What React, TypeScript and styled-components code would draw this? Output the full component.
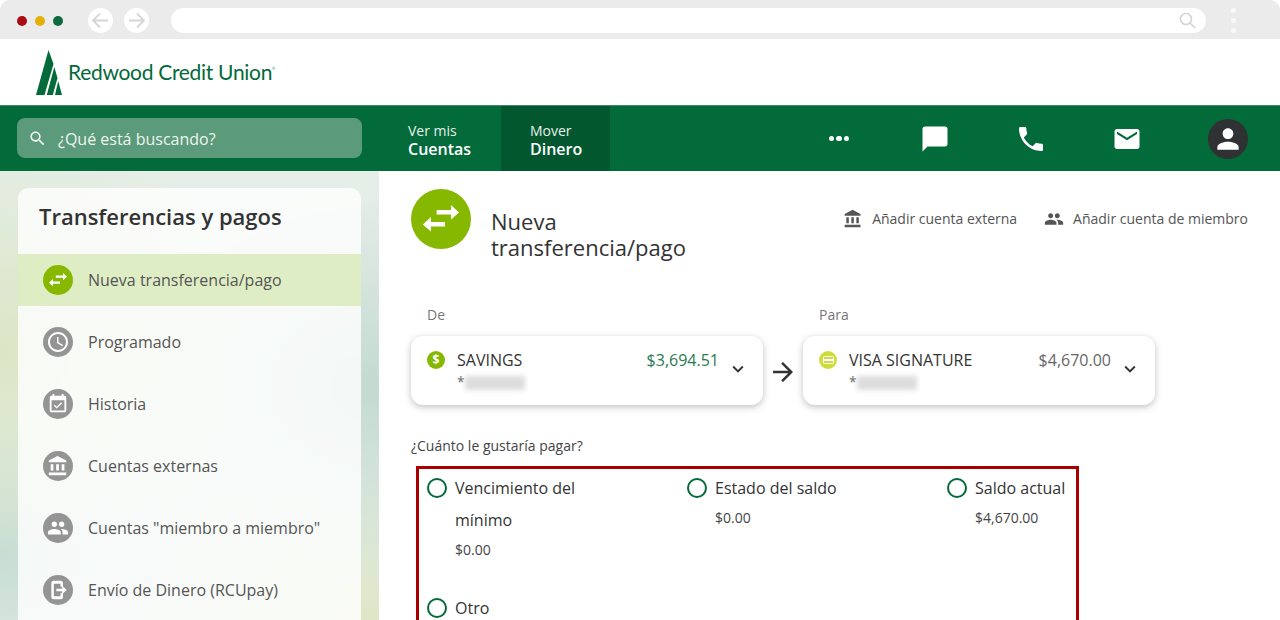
import React from "react";
import styled, { createGlobalStyle } from "styled-components";

const GREEN = "#036a3a";
const LIME = "#86b800";

const paths = {
  search: "M15.5 14h-.79l-.28-.27C15.41 12.59 16 11.11 16 9.5 16 5.91 13.09 3 9.5 3S3 5.91 3 9.5 5.91 16 9.5 16c1.61 0 3.09-.59 4.23-1.57l.27.28v.79l5 4.99L20.49 19l-4.99-5zm-6 0C7.01 14 5 11.99 5 9.5S7.01 5 9.5 5 14 7.01 14 9.5 11.99 14 9.5 14z",
  chat: "M20 2H4c-1.1 0-2 .9-2 2v18l4-4h14c1.1 0 2-.9 2-2V4c0-1.1-.9-2-2-2z",
  phone: "M6.62 10.79c1.44 2.83 3.76 5.14 6.59 6.59l2.2-2.2c.27-.27.67-.36 1.02-.24 1.12.37 2.33.57 3.57.57.55 0 1 .45 1 1V20c0 .55-.45 1-1 1-9.39 0-17-7.61-17-17 0-.55.45-1 1-1h3.5c.55 0 1 .45 1 1 0 1.25.2 2.45.57 3.57.11.35.03.74-.25 1.02l-2.2 2.2z",
  mail: "M20 4H4c-1.1 0-1.99.9-1.99 2L2 18c0 1.1.9 2 2 2h16c1.1 0 2-.9 2-2V6c0-1.1-.9-2-2-2zm0 4l-8 5-8-5V6l8 5 8-5v2z",
  person: "M12 12c2.21 0 4-1.79 4-4s-1.79-4-4-4-4 1.79-4 4 1.79 4 4 4zm0 2c-2.67 0-8 1.34-8 4v2h16v-2c0-2.66-5.33-4-8-4z",
  bank: "M4 10v7h3v-7H4zm6 0v7h3v-7h-3zM2 22h19v-3H2v3zm14-12v7h3v-7h-3zm-4.5-9L2 6v2h19V6l-9.5-5z",
  people: "M16 11c1.66 0 2.99-1.34 2.99-3S17.66 5 16 5c-1.66 0-3 1.34-3 3s1.34 3 3 3zm-8 0c1.66 0 2.99-1.34 2.99-3S9.66 5 8 5C6.34 5 5 6.34 5 8s1.34 3 3 3zm0 2c-2.33 0-7 1.17-7 3.5V19h14v-2.5c0-2.33-4.67-3.5-7-3.5zm8 0c-.29 0-.62.02-.97.05 1.16.84 1.97 1.97 1.97 3.45V19h6v-2.5c0-2.33-4.67-3.5-7-3.5z",
  clock: "M11.99 2C6.47 2 2 6.48 2 12s4.47 10 9.99 10C17.52 22 22 17.52 22 12S17.52 2 11.99 2zM12 20c-4.42 0-8-3.58-8-8s3.58-8 8-8 8 3.58 8 8-3.58 8-8 8zm.5-13H11v6l5.25 3.15.75-1.23-4.5-2.67z",
  event: "M16.53 11.06L15.47 10l-4.88 4.88-2.12-2.12-1.06 1.06L10.59 17l5.94-5.94zM19 3h-1V1h-2v2H8V1H6v2H5c-1.11 0-1.99.9-1.99 2L3 19c0 1.1.89 2 2 2h14c1.1 0 2-.9 2-2V5c0-1.1-.9-2-2-2zm0 16H5V8h14v11z",
  send: "M4 4a3 3 0 0 1 3-3h8a3 3 0 0 1 3 3v4h-3V4.500H7v15h8V16h3v4a3 3 0 0 1-3 3H7a3 3 0 0 1-3-3ZM10 10.500h7V7l5.500 5-5.500 5v-3.500h-7Z",
  chevron: "M16.59 8.59L12 13.17 7.41 8.59 6 10l6 6 6-6z",
  forward: "M12 4l-1.41 1.41L16.17 11H4v2h12.17l-5.58 5.59L12 20l8-8z",
  swap: "M12.800 10.500h7.200V8l4 3.700-4 3.600v-2.500h-7.200ZM17 16.500h-7V14l-4.100 3.700 4.100 3.600v-2.500h7Z",
};

const GlobalStyle = createGlobalStyle`
  html, body { margin: 0; padding: 0; height: 620px; overflow: hidden; background: #fff; }
  body { font-family: "Open Sans", "Liberation Sans", sans-serif; color: #333; }
  * { box-sizing: border-box; }
`;

const Page = styled.div`
  width: 1280px;
  height: 620px;
  overflow: hidden;
  display: flex;
  flex-direction: column;
`;

const BrowserBar = styled.div`
  flex: 0 0 39px;
  background: #ebebeb;
  border-radius: 10px 10px 0 0;
  display: flex;
  align-items: center;
  padding-top: 2px;
`;
const Dots = styled.div`
  display: flex;
  gap: 8px;
  margin-left: 17px;
`;
const Dot = styled.span<{ $c: string }>`
  width: 10px;
  height: 10px;
  border-radius: 50%;
  background: ${(p) => p.$c};
`;
const NavCircles = styled.div`
  display: flex;
  gap: 11px;
  margin-left: 25px;
`;
const NavCircle = styled.span`
  width: 25px;
  height: 25px;
  border-radius: 50%;
  background: #fff;
  display: flex;
  align-items: center;
  justify-content: center;
`;
const UrlBar = styled.div`
  width: 1035px;
  height: 25px;
  margin-left: 22px;
  background: #fff;
  border-radius: 13px;
  display: flex;
  align-items: center;
  justify-content: flex-end;
  padding-right: 10px;
`;
const Kebab = styled.div`
  margin-left: 25px;
  display: flex;
  flex-direction: column;
  gap: 5px;
`;
const KebabDot = styled.span`
  width: 5px;
  height: 5px;
  border-radius: 50%;
  background: #f8f8f8;
`;

const SiteHeader = styled.div`
  flex: 0 0 66px;
  background: #fff;
  display: flex;
  align-items: flex-start;
  padding: 11px 0 0 35px;
`;
const LogoText = styled.span`
  font-family: Lato, "Liberation Sans", sans-serif;
  font-size: 21px;
  letter-spacing: -0.3px;
  color: ${GREEN};
  margin: 8px 0 0 5px;
  line-height: 27px;
  white-space: nowrap;
`;
const LogoMark = styled.sup`
  font-size: 4px;
  vertical-align: 10px;
  line-height: 0;
`;

const Nav = styled.nav`
  flex: 0 0 66px;
  background: ${GREEN};
  border-top: 1px solid #3d8a64;
  display: flex;
  align-items: stretch;
  padding-left: 17px;
  padding-right: 32px;
`;
const SearchBox = styled.div`
  width: 345px;
  height: 40px;
  margin-top: 12px;
  background: #5b9a7b;
  border-radius: 8px;
  display: flex;
  align-items: center;
  padding: 1px 0 0 11px;
  gap: 11px;
  font-size: 16px;
  color: #eef5f0;
`;
const Tabs = styled.div`
  display: flex;
  margin-left: 30px;
`;
const Tab = styled.div<{ $active?: boolean }>`
  width: 109px;
  padding: 16px 0 0 16px;
  background: ${(p) => (p.$active ? "#02572f" : "transparent")};
  padding-left: ${(p) => (p.$active ? "29px" : "16px")};
  color: #fff;
`;
const TabTop = styled.div`
  font-size: 14px;
  line-height: 18px;
  color: #e8f1ec;
`;
const TabMain = styled.div`
  font-size: 16px;
  line-height: 19px;
  font-weight: 600;
`;
const NavIcons = styled.div`
  margin-left: auto;
  display: flex;
  align-items: center;
`;
const NavIcon = styled.span<{ $w: number }>`
  width: ${(p) => p.$w}px;
  display: flex;
  justify-content: center;
  color: #fff;
`;
const MoreDots = styled.span`
  display: flex;
  gap: 2px;
`;
const MoreDot = styled.span`
  width: 5.500px;
  height: 5.500px;
  border-radius: 50%;
  background: #fff;
`;
const Avatar = styled.span`
  width: 40px;
  height: 40px;
  border-radius: 50%;
  background: #2f3132;
  color: #fff;
  display: flex;
  align-items: center;
  justify-content: center;
  margin-left: 33px;
`;

const Content = styled.div`
  flex: 1;
  display: flex;
  min-height: 0;
`;
const Sidebar = styled.aside`
  flex: 0 0 379px;
  padding: 17px 18px 0;
  background:
    radial-gradient(260px 220px at 0% 40%, #dae6c5 0%, rgba(218, 230, 197, 0) 100%),
    radial-gradient(260px 200px at 100% 48%, #c3dad0 0%, rgba(195, 218, 208, 0) 100%),
    radial-gradient(260px 160px at 100% 100%, #dde6c6 0%, rgba(221, 230, 198, 0) 100%),
    radial-gradient(240px 160px at 0% 85%, #c7dcd4 0%, rgba(199, 220, 212, 0) 100%),
    #e6eee8;
`;
const SidePanel = styled.div`
  height: 470px;
  background: rgba(255, 255, 255, 0.8);
  border-radius: 10px 10px 0 0;
`;
const SideTitle = styled.h2`
  margin: 0;
  height: 66px;
  padding: 12px 0 0 21px;
  font-size: 22px;
  line-height: 32px;
  font-weight: 600;
  color: #333;
`;
const SideList = styled.div`
  display: flex;
  flex-direction: column;
  gap: 10px;
`;
const SideRow = styled.div<{ $active?: boolean }>`
  height: 52px;
  display: flex;
  align-items: center;
  padding-left: 25px;
  gap: 15px;
  font-size: 16px;
  color: #555;
  background: ${(p) => (p.$active ? "#dfedc5" : "transparent")};
`;
const SideIcon = styled.span<{ $active?: boolean }>`
  width: 30px;
  height: 30px;
  border-radius: 50%;
  background: ${(p) => (p.$active ? LIME : "#949494")};
  color: #fff;
  display: flex;
  align-items: center;
  justify-content: center;
`;

const Main = styled.main`
  flex: 1;
  padding: 18px 0 0 32px;
  min-width: 0;
`;
const MainHead = styled.div`
  display: flex;
  align-items: flex-start;
  height: 104px;
`;
const BigIcon = styled.span`
  width: 60px;
  height: 60px;
  border-radius: 50%;
  background: ${LIME};
  color: #fff;
  display: flex;
  align-items: center;
  justify-content: center;
  flex: none;
`;
const PageTitle = styled.h1`
  margin: 19px 0 0 20px;
  width: 210px;
  font-size: 22px;
  line-height: 26px;
  font-weight: 400;
  color: #333;
`;
const HeadLinks = styled.div`
  margin-left: auto;
  margin-right: 32px;
  margin-top: 18px;
  display: flex;
  gap: 27px;
`;
const HeadLink = styled.span`
  display: flex;
  align-items: center;
  gap: 9px;
  font-size: 14px;
  line-height: 24px;
  color: #555;
  white-space: nowrap;
`;

const Accounts = styled.div`
  display: grid;
  grid-template-columns: 352px 40px 352px;
  width: 744px;
  margin-top: 10px;
`;
const AccountCol = styled.div``;
const FieldLabel = styled.div`
  font-size: 14px;
  line-height: 24px;
  color: #777;
  padding-left: 16px;
  height: 33px;
`;
const Card = styled.div`
  height: 69px;
  background: #fff;
  border-radius: 12px;
  box-shadow: 0 2px 7px rgba(0, 0, 0, 0.25);
  padding: 12px 16px;
  display: flex;
  align-items: flex-start;
`;
const CardIcon = styled.span<{ $c: string }>`
  width: 18px;
  height: 18px;
  margin-top: 3px;
  border-radius: 50%;
  background: ${(p) => p.$c};
  color: #fff;
  font-size: 12px;
  font-weight: 700;
  line-height: 18px;
  flex: none;
  display: flex;
  align-items: center;
  justify-content: center;
`;
const MiniCard = styled.span`
  width: 11px;
  height: 8px;
  border-radius: 1.500px;
  border: 1.500px solid #fff;
  background: linear-gradient(#fff, #fff) center / 100% 2px no-repeat;
`;
const CardBody = styled.div`
  margin-left: 12px;
  flex: 1;
`;
const CardName = styled.div`
  font-size: 16px;
  line-height: 24px;
  color: #333;
`;
const CardNumber = styled.div`
  display: flex;
  align-items: center;
  font-size: 14px;
  line-height: 20px;
  color: #666;
`;
const Blur = styled.span`
  width: 60px;
  height: 14px;
  background: #dcdcdc;
  filter: blur(2.500px);
  margin-top: 2px;
`;
const Amount = styled.div<{ $c: string }>`
  font-size: 16px;
  line-height: 24px;
  color: ${(p) => p.$c};
`;
const Chevron = styled.span`
  width: 24px;
  display: flex;
  justify-content: center;
  margin: 10px -3px 0 7px;
  color: #333;
`;
const ArrowCell = styled.div`
  display: flex;
  justify-content: center;
  padding-top: 36px;
  align-items: center;
  color: #333;
`;

const Question = styled.div`
  margin-top: 30px;
  font-size: 14px;
  line-height: 22px;
  color: #444;
`;
const RedBox = styled.div`
  margin: 9px 0 0 5px;
  width: 663px;
  height: 200px;
  border: 3px solid #a80000;
  padding: 3px 8px 0;
  display: grid;
  grid-template-columns: 260px 260px 1fr;
  grid-auto-rows: min-content;
`;
const Option = styled.div`
  display: flex;
  gap: 8px;
  min-height: 120px;
  align-items: flex-start;
`;
const Radio = styled.span`
  width: 20px;
  height: 20px;
  border-radius: 50%;
  border: 2px solid ${GREEN};
  margin-top: 6px;
  flex: none;
`;
const OptionText = styled.div`
  max-width: 170px;
`;
const OptionLabel = styled.div`
  font-size: 16px;
  line-height: 32px;
  color: #333;
`;
const OptionAmount = styled.div`
  font-size: 14px;
  line-height: 28px;
  color: #444;
`;

const Icon: React.FC<{ d: string; size: number; vb?: number }> = ({ d, size, vb = 24 }) => (
  <svg width={size} height={size} viewBox={`0 0 ${vb} ${vb}`} fill="currentColor" aria-hidden="true">
    <path d={d} />
  </svg>
);

const BrowserArrow: React.FC<{ dir: "left" | "right" }> = ({ dir }) => (
  <svg width="19" height="19" viewBox="0 0 19 19" fill="none" stroke="#d6d6d6" strokeWidth="1.800">
    {dir === "left" ? <path d="M17 9.500H2M9 2.500l-7 7 7 7" /> : <path d="M2 9.500h15M10 2.500l7 7-7 7" />}
  </svg>
);

const side = [
  { label: "Nueva transferencia/pago", d: paths.swap, size: 30, active: true },
  { label: "Programado", d: paths.clock, size: 24 },
  { label: "Historia", d: paths.event, size: 22 },
  { label: "Cuentas externas", d: paths.bank, size: 22 },
  { label: 'Cuentas "miembro a miembro"', d: paths.people, size: 22 },
  { label: "Envío de Dinero (RCUpay)", d: paths.send, size: 20 },
];

export default function App() {
  return (
    <Page>
      <GlobalStyle />
      <BrowserBar>
        <Dots>
          <Dot $c="#a80b12" />
          <Dot $c="#e3b106" />
          <Dot $c="#0b6b3d" />
        </Dots>
        <NavCircles>
          <NavCircle><BrowserArrow dir="left" /></NavCircle>
          <NavCircle><BrowserArrow dir="right" /></NavCircle>
        </NavCircles>
        <UrlBar>
          <svg width="17" height="17" viewBox="0 0 17 17" fill="none" stroke="#d4d4d4" strokeWidth="1.600">
            <circle cx="7" cy="7" r="5.500" />
            <path d="M11 11l5 5" />
          </svg>
        </UrlBar>
        <Kebab>
          <KebabDot />
          <KebabDot />
          <KebabDot />
        </Kebab>
      </BrowserBar>

      <SiteHeader>
        <svg width="28" height="46" viewBox="0 0 28 46" fill={GREEN} aria-label="Redwood Credit Union logo">
          <path d="M13.500 0 1 45h8.500L18.500 14Z" />
          <path d="M19.300 17 11.800 45h6L22.500 28Z" />
          <path d="M23.200 31 20 45h7Z" />
        </svg>
        <LogoText>
          Redwood Credit Union<LogoMark>®</LogoMark>
        </LogoText>
      </SiteHeader>

      <Nav>
        <SearchBox>
          <Icon d={paths.search} size={19} />
          ¿Qué está buscando?
        </SearchBox>
        <Tabs>
          <Tab>
            <TabTop>Ver mis</TabTop>
            <TabMain>Cuentas</TabMain>
          </Tab>
          <Tab $active>
            <TabTop>Mover</TabTop>
            <TabMain>Dinero</TabMain>
          </Tab>
        </Tabs>
        <NavIcons>
          <NavIcon $w={96}>
            <MoreDots><MoreDot /><MoreDot /><MoreDot /></MoreDots>
          </NavIcon>
          <NavIcon $w={96}><Icon d={paths.chat} size={30} /></NavIcon>
          <NavIcon $w={96}><Icon d={paths.phone} size={32} /></NavIcon>
          <NavIcon $w={96}><Icon d={paths.mail} size={30} /></NavIcon>
          <Avatar><Icon d={paths.person} size={32} /></Avatar>
        </NavIcons>
      </Nav>

      <Content>
        <Sidebar>
          <SidePanel>
            <SideTitle>Transferencias y pagos</SideTitle>
            <SideList>
              {side.map((s) => (
                <SideRow key={s.label} $active={s.active}>
                  <SideIcon $active={s.active}>
                    <Icon d={s.d} size={s.size} vb={s.active ? 30 : 24} />
                  </SideIcon>
                  {s.label}
                </SideRow>
              ))}
            </SideList>
          </SidePanel>
        </Sidebar>

        <Main>
          <MainHead>
            <BigIcon><Icon d={paths.swap} size={60} vb={30} /></BigIcon>
            <PageTitle>Nueva transferencia/pago</PageTitle>
            <HeadLinks>
              <HeadLink><Icon d={paths.bank} size={20} />Añadir cuenta externa</HeadLink>
              <HeadLink><Icon d={paths.people} size={20} />Añadir cuenta de miembro</HeadLink>
            </HeadLinks>
          </MainHead>

          <Accounts>
            <AccountCol>
              <FieldLabel>De</FieldLabel>
              <Card>
                <CardIcon $c={LIME}>$</CardIcon>
                <CardBody>
                  <CardName>SAVINGS</CardName>
                  <CardNumber>*<Blur /></CardNumber>
                </CardBody>
                <Amount $c="#2a7a52">$3,694.51</Amount>
                <Chevron><Icon d={paths.chevron} size={22} /></Chevron>
              </Card>
            </AccountCol>
            <ArrowCell><Icon d={paths.forward} size={30} /></ArrowCell>
            <AccountCol>
              <FieldLabel>Para</FieldLabel>
              <Card>
                <CardIcon $c="#cfdd3c"><MiniCard /></CardIcon>
                <CardBody>
                  <CardName>VISA SIGNATURE</CardName>
                  <CardNumber>*<Blur /></CardNumber>
                </CardBody>
                <Amount $c="#666">$4,670.00</Amount>
                <Chevron><Icon d={paths.chevron} size={22} /></Chevron>
              </Card>
            </AccountCol>
          </Accounts>

          <Question>¿Cuánto le gustaría pagar?</Question>
          <RedBox>
            <Option>
              <Radio />
              <OptionText>
                <OptionLabel>Vencimiento del mínimo</OptionLabel>
                <OptionAmount>$0.00</OptionAmount>
              </OptionText>
            </Option>
            <Option>
              <Radio />
              <OptionText>
                <OptionLabel>Estado del saldo</OptionLabel>
                <OptionAmount>$0.00</OptionAmount>
              </OptionText>
            </Option>
            <Option>
              <Radio />
              <OptionText>
                <OptionLabel>Saldo actual</OptionLabel>
                <OptionAmount>$4,670.00</OptionAmount>
              </OptionText>
            </Option>
            <Option>
              <Radio />
              <OptionText>
                <OptionLabel>Otro</OptionLabel>
              </OptionText>
            </Option>
          </RedBox>
        </Main>
      </Content>
    </Page>
  );
}
